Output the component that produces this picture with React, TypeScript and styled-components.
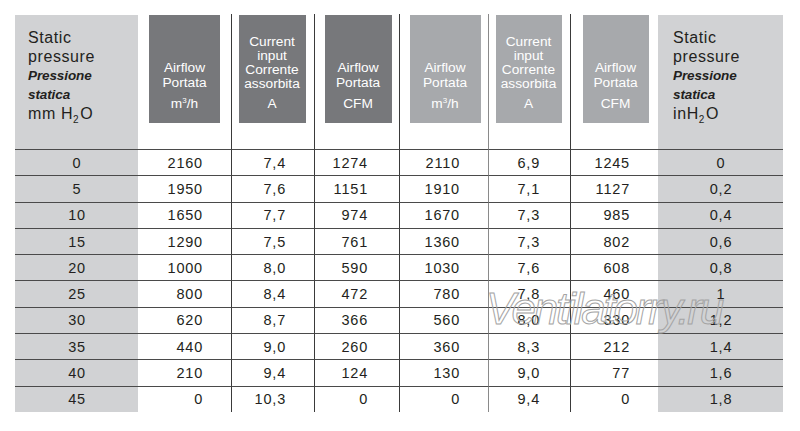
import React from "react";
import styled, { createGlobalStyle } from "styled-components";

const Global = createGlobalStyle`
  html, body { margin: 0; padding: 0; background: #ffffff; }
  body { font-family: "Liberation Sans", Arial, Helvetica, sans-serif; color: #231f20; }
`;

const Page = styled.div`
  padding: 14px 17px 0 15px;
`;

const Table = styled.div`
  position: relative;
  display: grid;
  grid-template-columns: 123px 93px 83px 85px 89px 82px 88px 125px;
  grid-template-rows: 135px repeat(10, 26.3px);
  width: 768px;
`;

const SideHead = styled.div<{ $right?: boolean }>`
  background: #d1d2d4;
  margin-top: 1px;
  padding: 13px 0 0 ${(p) => (p.$right ? "15px" : "13px")};
  font-size: 16px;
  letter-spacing: 0.6px;
  line-height: 19px;
  color: #231f20;
`;

const Line = styled.span<{ $em?: boolean }>`
  display: block;
  white-space: nowrap;
  ${(p) =>
    p.$em &&
    `font-weight: bold; font-style: italic; font-size: 13.5px; letter-spacing: -0.1px;`}
`;

const Sub = styled.span`
  font-size: 10px;
  position: relative;
  top: 4px;
  line-height: 0;
  margin: 0 1px 0 0;
`;

const Sup = styled.span`
  font-size: 8px;
  position: relative;
  top: -5px;
  line-height: 0;
`;

const HeadCell = styled.div<{ $line?: string }>`
  display: flex;
  justify-content: center;
  align-items: flex-start;
  ${(p) => p.$line && `border-left: 1px solid ${p.$line};`}
`;

const HeadBox = styled.div<{ $tone: "dark" | "light"; $w: number; $shift: number }>`
  width: ${(p) => p.$w}px;
  height: 108px;
  margin: 1px 0 0 ${(p) => p.$shift}px;
  background: ${(p) => (p.$tone === "dark" ? "#77787b" : "#a7a9ac")};
  color: #ffffff;
  display: flex;
  flex-direction: column;
  justify-content: flex-end;
  align-items: center;
  padding-bottom: 12px;
  box-sizing: border-box;
  font-size: 13.7px;
  text-align: center;
`;

const HeadName = styled.div<{ $tight?: boolean }>`
  line-height: ${(p) => (p.$tight ? "14px" : "15.5px")};
  white-space: nowrap;
`;

const HeadUnit = styled.div`
  margin-top: 6px;
  line-height: 14.5px;
  white-space: nowrap;
`;

const SideCell = styled.div`
  background: #d1d2d4;
  border-top: 1px solid #4a4a4a;
  display: flex;
  align-items: center;
  justify-content: center;
  font-size: 14.5px;
  letter-spacing: 0.8px;
  padding-left: 1px;
`;

const DataCell = styled.div<{ $pad: number; $line?: string }>`
  border-top: 1px solid #4a4a4a;
  ${(p) => p.$line && `border-left: 1px solid ${p.$line};`}
  display: flex;
  align-items: center;
  justify-content: flex-end;
  padding-right: ${(p) => p.$pad}px;
  font-size: 14.5px;
  letter-spacing: 0.8px;
`;

const Watermark = styled.div`
  position: absolute;
  left: 471px;
  top: 273px;
  font-size: 44px;
  line-height: 1;
  font-style: italic;
  letter-spacing: -2.2px;
  color: transparent;
  -webkit-text-stroke: 1px #a4a4a4;
  white-space: nowrap;
  pointer-events: none;
`;

type Col = {
  tone: "dark" | "light";
  name: string[];
  unit: React.ReactNode;
  tight?: boolean;
  line?: string;
  pad: number;
  w: number;
  shift: number;
};

const cols: Col[] = [
  { tone: "dark", name: ["Airflow", "Portata"], unit: <>m<Sup>3</Sup>/h</>, pad: 28, w: 71, shift: 0 },
  { tone: "dark", name: ["Current", "input", "Corrente", "assorbita"], unit: "A", tight: true, line: "#3a3a3a", pad: 28, w: 67, shift: -2 },
  { tone: "dark", name: ["Airflow", "Portata"], unit: "CFM", line: "#3a3a3a", pad: 31, w: 67, shift: 2 },
  { tone: "light", name: ["Airflow", "Portata"], unit: <>m<Sup>3</Sup>/h</>, line: "#3a3a3a", pad: 28, w: 71, shift: 2 },
  { tone: "light", name: ["Current", "input", "Corrente", "assorbita"], unit: "A", tight: true, line: "#8a8a8a", pad: 30, w: 66, shift: -2 },
  { tone: "light", name: ["Airflow", "Portata"], unit: "CFM", line: "#3a3a3a", pad: 28, w: 66, shift: 2 },
];

const rows: [string, string, string, string, string, string, string, string][] = [
  ["0", "2160", "7,4", "1274", "2110", "6,9", "1245", "0"],
  ["5", "1950", "7,6", "1151", "1910", "7,1", "1127", "0,2"],
  ["10", "1650", "7,7", "974", "1670", "7,3", "985", "0,4"],
  ["15", "1290", "7,5", "761", "1360", "7,3", "802", "0,6"],
  ["20", "1000", "8,0", "590", "1030", "7,6", "608", "0,8"],
  ["25", "800", "8,4", "472", "780", "7,8", "460", "1"],
  ["30", "620", "8,7", "366", "560", "8,0", "330", "1,2"],
  ["35", "440", "9,0", "260", "360", "8,3", "212", "1,4"],
  ["40", "210", "9,4", "124", "130", "9,0", "77", "1,6"],
  ["45", "0", "10,3", "0", "0", "9,4", "0", "1,8"],
];

const SideLabel: React.FC<{ right?: boolean }> = ({ right }) => (
  <SideHead $right={right}>
    <Line>Static</Line>
    <Line>pressure</Line>
    <Line $em>Pressione</Line>
    <Line $em>statica</Line>
    <Line>
      {right ? "in" : "mm "}H<Sub>2</Sub>O
    </Line>
  </SideHead>
);

export default function App() {
  return (
    <>
      <Global />
      <Page>
        <Table>
          <SideLabel />
          {cols.map((c, i) => (
            <HeadCell key={i} $line={c.line}>
              <HeadBox $tone={c.tone} $w={c.w} $shift={c.shift}>
                <HeadName $tight={c.tight}>
                  {c.name.map((n) => (
                    <div key={n}>{n}</div>
                  ))}
                </HeadName>
                <HeadUnit>{c.unit}</HeadUnit>
              </HeadBox>
            </HeadCell>
          ))}
          <SideLabel right />
          {rows.map((r, ri) => (
            <React.Fragment key={ri}>
              <SideCell>{r[0]}</SideCell>
              {cols.map((c, ci) => (
                <DataCell key={ci} $pad={c.pad} $line={c.line}>
                  {r[ci + 1]}
                </DataCell>
              ))}
              <SideCell>{r[7]}</SideCell>
            </React.Fragment>
          ))}
          <Watermark>Ventilatorry.ru</Watermark>
        </Table>
      </Page>
    </>
  );
}
